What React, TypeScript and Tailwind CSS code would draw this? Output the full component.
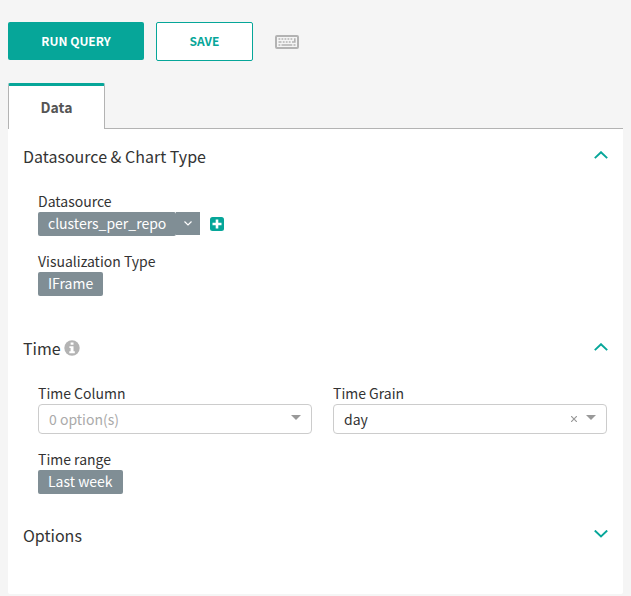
import { useId, useState } from "react";
import type { ReactNode } from "react";

function KeyboardIcon() {
  return (
    <svg viewBox="0 0 24 14" className="h-3.5 w-6" fill="none" aria-hidden="true">
      <rect x="1" y="1" width="22" height="12" rx="1" stroke="#b3b3b3" strokeWidth="2" />
      <path d="M3.5 4h1.8M6.5 4h1.8M9.5 4h1.8M12.5 4h1.8M15.5 4h1.8M3.5 7h3M7.8 7h1.8M10.8 7h1.8M13.8 7h1.8M3.5 10h1.8M6.5 10h10.8M18.5 10h2M17 7h2.8V3.2" stroke="#b3b3b3" strokeWidth="1.7" />
    </svg>
  );
}

function PlusSquareIcon() {
  return (
    <svg viewBox="0 0 14 14" className="size-3.5" aria-hidden="true">
      <rect width="14" height="14" rx="2.5" fill="#06a699" />
      <path d="M7 2.5v9M2.5 7h9" stroke="#fff" strokeWidth="2.6" />
    </svg>
  );
}

function InfoIcon() {
  return (
    <svg viewBox="0 0 16 16" className="size-4" aria-hidden="true">
      <circle cx="8" cy="8" r="7.7" fill="#b3b3b3" />
      <path d="M6.6 2.4h2.9v2.4H6.6zM5.4 6.2h4.1v5h1.3v2H5.3v-2h1.3V8.1H5.4z" fill="#fff" />
    </svg>
  );
}

function Caret({ className }: { className: string }) {
  return (
    <svg viewBox="0 0 10 5" className={className} aria-hidden="true">
      <path d="M0 0h10L5 5z" fill="#999" />
    </svg>
  );
}

function Section({ title, info, defaultOpen, className, children }: {
  title: string;
  info?: boolean;
  defaultOpen?: boolean;
  className: string;
  children?: ReactNode;
}) {
  const [open, setOpen] = useState(Boolean(defaultOpen));
  return (
    <section className={className}>
      <div className="flex h-6 items-start justify-between">
        <h2 className="flex items-center gap-[3px] text-base leading-[22px]">
          {title}
          {info && <InfoIcon />}
        </h2>
        <button
          type="button"
          aria-label={`Toggle ${title}`}
          aria-expanded={open}
          onClick={() => setOpen(!open)}
          className="flex h-5 cursor-pointer items-center"
        >
          <svg viewBox="0 0 14 8" className="h-2 w-3.5" fill="none" stroke="#06a699" strokeWidth="1.9" aria-hidden="true">
            <path d={open ? "M.8 7.1L7 1.2l6.2 5.9" : "M.8.5L7 6.4 13.2.5"} />
          </svg>
        </button>
      </div>
      {open && children && <div className="mt-[23px] flex flex-col gap-4 pr-px pl-[15px]">{children}</div>}
    </section>
  );
}

function Chip({ children }: { children: string }) {
  return (
    <button type="button" className="h-6 rounded-xs bg-[#808e95] px-2.5 pb-0.5 leading-[22px] text-white">
      {children}
    </button>
  );
}

function Field({ label, children }: { label: string; children: ReactNode }) {
  return (
    <div role="group" aria-label={label}>
      <div className="pb-0.5 leading-[18px]">{label}</div>
      <div className="flex items-center">{children}</div>
    </div>
  );
}

function SelectField({ label, options, placeholder, initial = "" }: {
  label: string;
  options: string[];
  placeholder: string;
  initial?: string;
}) {
  const id = useId();
  const [value, setValue] = useState(initial);
  return (
    <div>
      <label htmlFor={id} className="block pb-0.5 leading-[18px]">{label}</label>
      <div className="relative">
        <select
          id={id}
          value={value}
          onChange={(e) => setValue(e.target.value)}
          className={`block h-[30px] w-full appearance-none rounded-sm border border-[#ccc] bg-white px-2.5 ${value ? "text-[#333]" : "text-[#aaa]"}`}
        >
          <option value="">{placeholder}</option>
          {options.map((o) => <option key={o}>{o}</option>)}
        </select>
        {value && (
          <button
            type="button"
            aria-label={`Clear ${label}`}
            onClick={() => setValue("")}
            className="absolute top-1.5 right-7 flex h-[18px] w-2.5 items-center justify-center"
          >
            <svg viewBox="0 0 6 6" className="size-1.5" stroke="#999" strokeWidth="1.2" aria-hidden="true">
              <path d="M0 0l6 6M6 0L0 6" />
            </svg>
          </button>
        )}
        <Caret className="pointer-events-none absolute top-[11px] right-[11px] h-[5px] w-2.5" />
      </div>
    </div>
  );
}

export default function App() {
  return (
    <div className="min-h-screen bg-[#f5f5f5] px-2 pt-[22px] pb-0.5 font-['Noto_Sans_CJK_SC',sans-serif] text-sm text-[#333]">
      <div className="flex items-start">
        <button type="button" className="h-[38px] w-[136px] rounded-xs bg-[#06a699] pb-px text-xs font-bold text-white">
          RUN QUERY
        </button>
        <button type="button" className="ml-3 h-[39px] w-[97px] rounded-xs border border-[#06a699] bg-white pb-0.5 text-xs font-bold text-[#06a699]">
          SAVE
        </button>
        <button type="button" aria-label="Keyboard shortcuts" className="ml-[22px] flex h-10 items-center">
          <KeyboardIcon />
        </button>
      </div>

      <div role="tablist" className="mt-[21px] flex border-b border-[#b3b3b3]">
        <button
          type="button"
          role="tab"
          aria-selected="true"
          className="-mb-px h-[46px] w-[97px] rounded-t-xs border-x border-t-3 border-x-[#b3b3b3] border-t-[#06a699] bg-white pb-0.5 font-bold text-[#555]"
        >
          Data
        </button>
      </div>

      <main role="tabpanel" className="rounded-b-xs bg-white px-[15px] pt-4 pb-[46px]">
        <Section title="Datasource & Chart Type" defaultOpen className="mb-[41px]">
          <Field label="Datasource">
            <Chip>clusters_per_repo</Chip>
            <button type="button" aria-label="Datasource actions" className="mb-px flex h-[23px] w-6 items-center justify-center bg-[#808e95]">
              <svg viewBox="0 0 8 5" className="h-[5px] w-2" fill="none" stroke="#fff" strokeWidth="1.2" aria-hidden="true">
                <path d="M.5.5L4 4 7.5.5" />
              </svg>
            </button>
            <button type="button" aria-label="Add datasource" className="ml-2.5">
              <PlusSquareIcon />
            </button>
          </Field>
          <Field label="Visualization Type">
            <Chip>IFrame</Chip>
          </Field>
        </Section>

        <Section title="Time" info defaultOpen className="mb-[30px]">
          <div className="grid grid-cols-2 gap-[21px]">
            <SelectField label="Time Column" placeholder="0 option(s)" options={[]} />
            <SelectField label="Time Grain" placeholder="Select" options={["hour", "day", "week", "month"]} initial="day" />
          </div>
          <Field label="Time range">
            <Chip>Last week</Chip>
          </Field>
        </Section>

        <Section title="Options" className="" />
      </main>
    </div>
  );
}
